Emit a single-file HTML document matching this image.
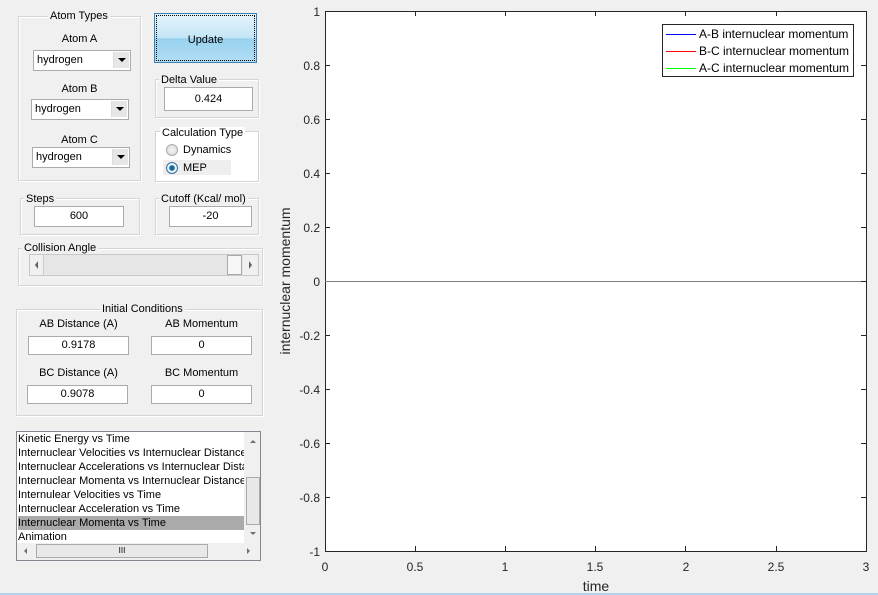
<!DOCTYPE html>
<html><head><style>
*{box-sizing:border-box;margin:0;padding:0}
body{width:878px;height:595px;background:#f0f0f0;font-family:"Liberation Sans",Arial,sans-serif;font-size:11px;color:#000;position:relative;overflow:hidden}
.a{position:absolute}
.fr{position:absolute;border:1px solid #d5d5d5;box-shadow:inset 1px 1px 0 #fff,1px 1px 0 #fff}
.lg{position:absolute;background:#f0f0f0;padding:0 2px;line-height:12px;white-space:nowrap}
.in{position:absolute;background:#fff;border:1px solid #ababab;text-align:center;line-height:18px}
.dd{position:absolute;background:#fff;border:1px solid #ababab;line-height:19px;padding-left:3px}
.dd i{position:absolute;right:1px;top:1px;width:16px;height:16px;background:#e6e6e6;border-left:1px solid #ddd}
.dd i:after{content:"";position:absolute;left:4px;top:6px;border-left:4px solid transparent;border-right:4px solid transparent;border-top:4px solid #000}
.c{position:absolute;text-align:center;white-space:nowrap}
</style></head><body>

<div class="fr" style="left:18px;top:16px;width:123px;height:165px"></div>
<div class="lg" style="left:48px;top:10px">Atom Types</div>
<div class="c" style="left:18px;width:123px;top:33px">Atom A</div>
<div class="dd" style="left:33px;top:50px;width:98px;height:21px">hydrogen<i></i></div>
<div class="c" style="left:18px;width:123px;top:83px">Atom B</div>
<div class="dd" style="left:31px;top:99px;width:98px;height:21px">hydrogen<i></i></div>
<div class="c" style="left:18px;width:123px;top:134px">Atom C</div>
<div class="dd" style="left:32px;top:147px;width:98px;height:21px">hydrogen<i></i></div>

<div class="a" style="left:154px;top:13px;width:103px;height:50px;border:1px solid #3c7fb1;background:linear-gradient(#e5f4fc 0%,#c4e5f6 50%,#98d1ef 51%,#b3def5 100%);outline:1px dotted #000;outline-offset:-3px;text-align:center;line-height:52px">Update</div>

<div class="fr" style="left:155px;top:79px;width:104px;height:39px"></div>
<div class="lg" style="left:159px;top:74px">Delta Value</div>
<div class="in" style="left:164px;top:87px;width:89px;height:24px;line-height:22px">0.424</div>

<div class="fr" style="left:155px;top:131px;width:104px;height:51px;background:#fff"></div>
<div class="lg" style="left:160px;top:127px;background:#fff">Calculation Type</div>
<div class="a" style="left:166px;top:144px;width:12px;height:12px;border-radius:50%;border:1px solid #aaa;background:radial-gradient(#f4f4f4,#d8d8d8)"></div>
<div class="a" style="left:183px;top:144px">Dynamics</div>
<div class="a" style="left:163px;top:160px;width:68px;height:15px;background:#eeeeee"></div>
<div class="a" style="left:166px;top:162px;width:12px;height:12px;border-radius:50%;border:1px solid #3a6e92;background:radial-gradient(#0f6a9e 0 2.5px,#e8f2f8 3px)"></div>
<div class="a" style="left:183px;top:162px">MEP</div>

<div class="fr" style="left:20px;top:198px;width:120px;height:37px"></div>
<div class="lg" style="left:24px;top:193px">Steps</div>
<div class="in" style="left:34px;top:206px;width:90px;height:21px">600</div>

<div class="fr" style="left:155px;top:198px;width:104px;height:37px"></div>
<div class="lg" style="left:159px;top:193px">Cutoff (Kcal/ mol)</div>
<div class="in" style="left:169px;top:206px;width:83px;height:21px">-20</div>

<div class="fr" style="left:18px;top:248px;width:245px;height:38px"></div>
<div class="lg" style="left:22px;top:242px">Collision Angle</div>
<div class="a" style="left:29px;top:254px;width:230px;height:22px;background:#e6e6e6;border:1px solid #c8c8c8"></div>
<div class="a" style="left:30px;top:255px;width:14px;height:20px;background:#f0f0f0;border-right:1px solid #ccc"></div>
<div class="a" style="left:35px;top:261px;border-top:4px solid transparent;border-bottom:4px solid transparent;border-right:3px solid #606060"></div>
<div class="a" style="left:227px;top:255px;width:15px;height:20px;background:#f7f7f7;border:1px solid #aaa"></div>
<div class="a" style="left:243px;top:255px;width:15px;height:20px;background:#f0f0f0"></div>
<div class="a" style="left:249px;top:261px;border-top:4px solid transparent;border-bottom:4px solid transparent;border-left:3px solid #606060"></div>

<div class="fr" style="left:16px;top:309px;width:247px;height:107px"></div>
<div class="lg" style="left:100px;top:303px">Initial Conditions</div>
<div class="c" style="left:28px;width:101px;top:318px">AB Distance (A)</div>
<div class="c" style="left:151px;width:101px;top:318px">AB Momentum</div>
<div class="in" style="left:28px;top:336px;width:101px;height:19px;line-height:17px">0.9178</div>
<div class="in" style="left:151px;top:336px;width:101px;height:19px;line-height:17px">0</div>
<div class="c" style="left:28px;width:101px;top:367px">BC Distance (A)</div>
<div class="c" style="left:151px;width:101px;top:367px">BC Momentum</div>
<div class="in" style="left:27px;top:385px;width:101px;height:19px;line-height:17px">0.9078</div>
<div class="in" style="left:151px;top:385px;width:101px;height:19px;line-height:17px">0</div>

<div class="a" style="left:16px;top:431px;width:245px;height:130px;background:#fff;border:1px solid #828790;overflow:hidden">
<div style="position:absolute;left:1px;top:0;width:227px;line-height:14px;white-space:nowrap;overflow:hidden">
<div>Kinetic Energy vs Time</div>
<div>Internuclear Velocities vs Internuclear Distance</div>
<div>Internuclear Accelerations vs Internuclear Distance</div>
<div>Internuclear Momenta vs Internuclear Distance</div>
<div>Internulear Velocities vs Time</div>
<div>Internuclear Acceleration vs Time</div>
<div style="background:#aaaaaa;margin-left:-1px;padding-left:1px">Internuclear Momenta vs Time</div>
<div>Animation</div>
</div>
<div style="position:absolute;left:227px;top:0;width:17px;height:111px;background:#f0f0f0"></div>
<div style="position:absolute;left:233px;top:8px;border-left:3px solid transparent;border-right:3px solid transparent;border-bottom:3px solid #707070"></div>
<div style="position:absolute;left:233px;top:100px;border-left:3px solid transparent;border-right:3px solid transparent;border-top:3px solid #707070"></div>
<div style="position:absolute;left:229px;top:45px;width:14px;height:48px;background:#e8e8e8;border:1px solid #aaa"></div>
<div style="position:absolute;left:0;top:111px;width:244px;height:18px;background:#f0f0f0"></div>
<div style="position:absolute;left:7px;top:116px;border-top:3px solid transparent;border-bottom:3px solid transparent;border-right:3px solid #707070"></div>
<div style="position:absolute;left:230px;top:116px;border-top:3px solid transparent;border-bottom:3px solid transparent;border-left:3px solid #707070"></div>
<div style="position:absolute;left:19px;top:112px;width:172px;height:14px;background:#e8e8e8;border:1px solid #aaa;text-align:center;font-size:8px;line-height:12px">III</div>
</div>

<svg class="a" style="left:0;top:0" width="878" height="595" font-family="Liberation Sans,Arial,sans-serif" font-size="12">
<rect x="325.5" y="11.5" width="541" height="540" fill="#fff" stroke="#262626"/>
<line x1="325" y1="281.5" x2="866" y2="281.5" stroke="#808080"/>
<g stroke="#262626">
<line x1="415.5" y1="551" x2="415.5" y2="546"/><line x1="505.5" y1="551" x2="505.5" y2="546"/><line x1="595.5" y1="551" x2="595.5" y2="546"/><line x1="685.5" y1="551" x2="685.5" y2="546"/><line x1="776.5" y1="551" x2="776.5" y2="546"/>
<line x1="415.5" y1="11" x2="415.5" y2="16"/><line x1="505.5" y1="11" x2="505.5" y2="16"/><line x1="595.5" y1="11" x2="595.5" y2="16"/><line x1="685.5" y1="11" x2="685.5" y2="16"/><line x1="776.5" y1="11" x2="776.5" y2="16"/>
<line x1="325" y1="65.5" x2="330" y2="65.5"/><line x1="325" y1="119.5" x2="330" y2="119.5"/><line x1="325" y1="173.5" x2="330" y2="173.5"/><line x1="325" y1="227.5" x2="330" y2="227.5"/><line x1="325" y1="335.5" x2="330" y2="335.5"/><line x1="325" y1="389.5" x2="330" y2="389.5"/><line x1="325" y1="443.5" x2="330" y2="443.5"/><line x1="325" y1="497.5" x2="330" y2="497.5"/>
<line x1="866" y1="65.5" x2="861" y2="65.5"/><line x1="866" y1="119.5" x2="861" y2="119.5"/><line x1="866" y1="173.5" x2="861" y2="173.5"/><line x1="866" y1="227.5" x2="861" y2="227.5"/><line x1="866" y1="281.5" x2="861" y2="281.5"/><line x1="866" y1="335.5" x2="861" y2="335.5"/><line x1="866" y1="389.5" x2="861" y2="389.5"/><line x1="866" y1="443.5" x2="861" y2="443.5"/><line x1="866" y1="497.5" x2="861" y2="497.5"/>
</g>
<g fill="#262626" text-anchor="end">
<text x="320" y="16">1</text><text x="320" y="70">0.8</text><text x="320" y="124">0.6</text><text x="320" y="178">0.4</text><text x="320" y="232">0.2</text><text x="320" y="286">0</text><text x="320" y="340">-0.2</text><text x="320" y="394">-0.4</text><text x="320" y="448">-0.6</text><text x="320" y="502">-0.8</text><text x="320" y="556">-1</text>
</g>
<g fill="#262626" text-anchor="middle">
<text x="325" y="571">0</text><text x="415" y="571">0.5</text><text x="505" y="571">1</text><text x="595" y="571">1.5</text><text x="686" y="571">2</text><text x="776" y="571">2.5</text><text x="866" y="571">3</text>
<text x="596" y="591" font-size="14">time</text>
<text transform="translate(290,281) rotate(-90)" font-size="14">internuclear momentum</text>
</g>
<rect x="662.5" y="24.5" width="191" height="52" fill="#fff" stroke="#262626"/>
<rect x="666" y="34" width="30" height="1" fill="#0000ff"/>
<rect x="666" y="51" width="30" height="1" fill="#ff0000"/>
<rect x="666" y="68" width="30" height="1" fill="#00ff00"/>
<g fill="#000"><text x="699" y="38">A-B internuclear momentum</text><text x="699" y="55">B-C internuclear momentum</text><text x="699" y="72">A-C internuclear momentum</text></g>
<line x1="0" y1="594" x2="878" y2="594" stroke="#b5d3ee" stroke-width="2"/>
</svg>
</body></html>
